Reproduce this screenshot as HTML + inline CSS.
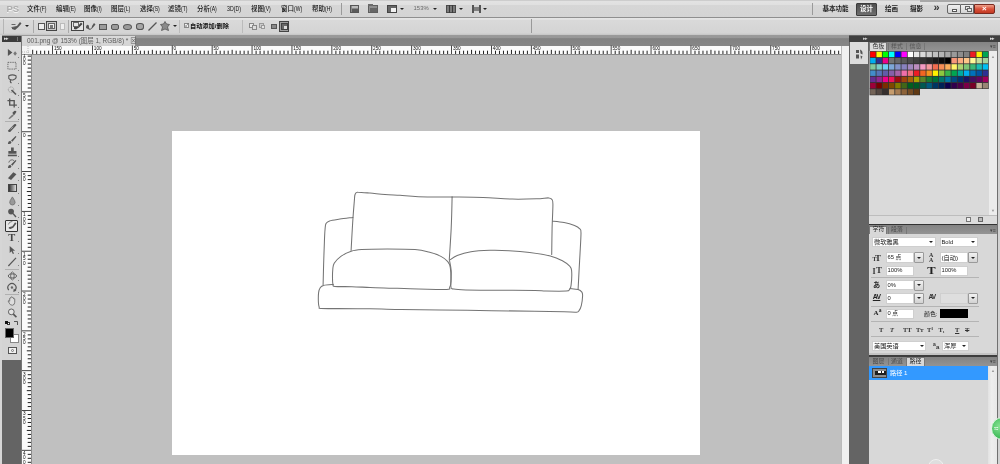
<!DOCTYPE html><html lang="zh"><head><meta charset="utf-8"><title>Photoshop</title><style>
html,body{margin:0;padding:0;}
body{width:1000px;height:464px;overflow:hidden;background:#c0c0c0;position:relative;
font-family:"Liberation Sans","Noto Sans CJK SC",sans-serif;}
div{position:absolute;box-sizing:border-box;}
.t{white-space:nowrap;filter:blur(0.3px);}
.b{filter:blur(0.3px);}
svg{position:absolute;overflow:visible;}
</style></head><body>
<div style="left:0px;top:0px;width:1000px;height:18px;background:linear-gradient(#cdcdcd 0px,#cdcdcd 1px,#e2e2e2 1.3px,#e0e0e0 4.5px,#d6d6d6 5.5px,#d4d4d4 17px);"></div>
<div style="left:0px;top:17px;width:1000px;height:0.9px;background:#8f8f8f;"></div>
<div style="left:0px;top:18px;width:1000px;height:17px;background:linear-gradient(#e6e6e6 0,#e2e2e2 1.5px,#d9d9d9 2.5px,#d4d4d4 15px,#c4c4c4 17px);"></div>
<div class="t " style="left:6.5px;top:3px;font-size:9.5px;color:#adadad;line-height:11.5px;font-weight:bold;letter-spacing:0px;text-shadow:0 0.5px 0 #f4f4f4;">PS</div>
<div class="t " style="left:27px;top:5px;font-size:6.5px;color:#111;line-height:8.5px;font-weight:500;">文件<span style="display:inline-block;transform:scaleX(.78);transform-origin:0 50%">(F)</span></div>
<div class="t " style="left:56px;top:5px;font-size:6.5px;color:#111;line-height:8.5px;font-weight:500;">编辑<span style="display:inline-block;transform:scaleX(.78);transform-origin:0 50%">(E)</span></div>
<div class="t " style="left:84px;top:5px;font-size:6.5px;color:#111;line-height:8.5px;font-weight:500;">图像<span style="display:inline-block;transform:scaleX(.78);transform-origin:0 50%">(I)</span></div>
<div class="t " style="left:111px;top:5px;font-size:6.5px;color:#111;line-height:8.5px;font-weight:500;">图层<span style="display:inline-block;transform:scaleX(.78);transform-origin:0 50%">(L)</span></div>
<div class="t " style="left:140px;top:5px;font-size:6.5px;color:#111;line-height:8.5px;font-weight:500;">选择<span style="display:inline-block;transform:scaleX(.78);transform-origin:0 50%">(S)</span></div>
<div class="t " style="left:168px;top:5px;font-size:6.5px;color:#111;line-height:8.5px;font-weight:500;">滤镜<span style="display:inline-block;transform:scaleX(.78);transform-origin:0 50%">(T)</span></div>
<div class="t " style="left:197px;top:5px;font-size:6.5px;color:#111;line-height:8.5px;font-weight:500;">分析<span style="display:inline-block;transform:scaleX(.78);transform-origin:0 50%">(A)</span></div>
<div class="t " style="left:227px;top:5px;font-size:6.5px;color:#111;line-height:8.5px;font-weight:500;"><span style="display:inline-block;transform:scaleX(.8);transform-origin:0 50%">3D(D)</span></div>
<div class="t " style="left:251px;top:5px;font-size:6.5px;color:#111;line-height:8.5px;font-weight:500;">视图<span style="display:inline-block;transform:scaleX(.78);transform-origin:0 50%">(V)</span></div>
<div class="t " style="left:281px;top:5px;font-size:6.5px;color:#111;line-height:8.5px;font-weight:500;">窗口<span style="display:inline-block;transform:scaleX(.78);transform-origin:0 50%">(W)</span></div>
<div class="t " style="left:312px;top:5px;font-size:6.5px;color:#111;line-height:8.5px;font-weight:500;">帮助<span style="display:inline-block;transform:scaleX(.78);transform-origin:0 50%">(H)</span></div>
<div style="left:341px;top:3px;width:1px;height:12px;background:#9a9a9a;"></div>
<div style="left:350px;top:4.5px;width:9.2px;height:8.5px;background:#8a8a8a;border:1px solid #555;"></div>
<div style="left:351.5px;top:6px;width:6px;height:1.5px;background:#bbb;"></div>
<div style="left:351.5px;top:9px;width:6px;height:2.5px;background:#5a5a5a;"></div>
<div style="left:368px;top:5px;width:10.4px;height:8px;background:#8e8e8e;border:1px solid #5e5e5e;"></div>
<div style="left:368px;top:4.3px;width:5px;height:1.5px;background:#6a6a6a;"></div>
<div style="left:370px;top:8px;width:6.5px;height:3.5px;background:#666;"></div>
<div style="left:387px;top:4.8px;width:10px;height:8.2px;background:#666;border:1px solid #444;"></div>
<div style="left:390.5px;top:8px;width:5.5px;height:4px;background:#f2f2f2;"></div>
<div style="left:400px;top:8px;width:0;height:0;border-left:2px solid transparent;border-right:2px solid transparent;border-top:2px solid #222;"></div>
<div class="t " style="left:413.6px;top:5px;font-size:5.9px;color:#6a6a6a;line-height:7.9px;">153%</div>
<div style="left:433px;top:8px;width:0;height:0;border-left:2px solid transparent;border-right:2px solid transparent;border-top:2px solid #222;"></div>
<div style="left:446.4px;top:4.8px;width:9.2px;height:8.2px;background:#7a7a7a;border:1px solid #4a4a4a;"></div>
<div style="left:449.2px;top:5px;width:0.9px;height:8px;background:#3a3a3a;"></div>
<div style="left:452.2px;top:5px;width:0.9px;height:8px;background:#3a3a3a;"></div>
<div style="left:458.8px;top:8px;width:0;height:0;border-left:2px solid transparent;border-right:2px solid transparent;border-top:2px solid #222;"></div>
<div style="left:471.5px;top:4.8px;width:9px;height:8.2px;border-left:2px solid #555;border-right:2px solid #555;"></div>
<div style="left:473.5px;top:6.5px;width:5px;height:4.5px;background:#808080;"></div>
<div style="left:483.3px;top:8px;width:0;height:0;border-left:2px solid transparent;border-right:2px solid transparent;border-top:2px solid #222;"></div>
<div style="left:812px;top:3px;width:1px;height:12px;background:#9a9a9a;"></div>
<div class="t " style="left:822.5px;top:5px;font-size:6.5px;color:#222;line-height:8.5px;font-weight:bold;">基本功能</div>
<div style="left:855.6px;top:3px;width:21.4px;height:12.6px;background:linear-gradient(#4e4e4e,#6e6e6e);border:1px solid #3c3c3c;border-radius:1px;"></div>
<div class="t " style="left:860px;top:5px;font-size:6.5px;color:#fff;line-height:8.5px;font-weight:bold;">设计</div>
<div class="t " style="left:885px;top:5px;font-size:6.5px;color:#222;line-height:8.5px;font-weight:bold;">绘画</div>
<div class="t " style="left:910px;top:5px;font-size:6.5px;color:#222;line-height:8.5px;font-weight:bold;">摄影</div>
<div class="t " style="left:933.5px;top:1px;font-size:11px;color:#333;line-height:13px;font-weight:bold;">»</div>
<div style="left:920px;top:0px;width:80px;height:1.6px;background:#a8a8a8;"></div>
<div style="left:947px;top:4px;width:14px;height:9.6px;background:linear-gradient(#f0f0f0,#d4d4d4);border:1px solid #666;border-radius:2px 0 0 2px;"></div>
<div style="left:951.5px;top:8.5px;width:5.5px;height:3px;background:#fff;border:1px solid #555;"></div>
<div style="left:961px;top:4px;width:13.4px;height:9.6px;background:linear-gradient(#f0f0f0,#d4d4d4);border:1px solid #666;border-left:none;"></div>
<div style="left:965px;top:6px;width:5px;height:4px;border:1px solid #666;"></div>
<div style="left:966.5px;top:7.5px;width:5px;height:4px;background:#e8e8e8;border:1px solid #666;"></div>
<div style="left:974.4px;top:4px;width:20.6px;height:9.6px;background:linear-gradient(#eda08a,#d9513a 50%,#c23a24);border:1px solid #7a2a20;border-radius:0 2px 2px 0;"></div>
<div class="t " style="left:982px;top:3.5px;font-size:8px;color:#fff;line-height:10px;font-weight:bold;">×</div>
<div style="left:3px;top:19px;width:1px;height:15px;background:#b5b5b5;"></div>
<svg style="left:11px;top:21px" width="11" height="10" viewBox="0 0 11 10"><path d="M1 6 L6 5 L9 1 L10.5 2.5 L7 6.5 L4 9 L1 8 Z" fill="#555"/><path d="M0.5 3.5 h4 M0.5 6.5 h3" stroke="#666" stroke-width="1"/></svg>
<div style="left:25px;top:25px;width:0;height:0;border-left:2px solid transparent;border-right:2px solid transparent;border-top:2px solid #222;"></div>
<div style="left:33px;top:20px;width:1px;height:13px;background:#aaa;"></div>
<div style="left:38px;top:23px;width:7px;height:7px;background:#eee;border:1px solid #555;"></div>
<div style="left:46px;top:21px;width:11px;height:10px;background:#c8c8c8;border:1px solid #444;"></div>
<div style="left:48px;top:23px;width:7px;height:6px;background:#eee;border:1px solid #666;"></div>
<div style="left:50px;top:25px;width:3px;height:3px;background:#777;"></div>
<div style="left:60px;top:23px;width:5px;height:7px;background:#eee;border:1px solid #bbb;"></div>
<div style="left:68px;top:20px;width:1px;height:13px;background:#aaa;"></div>
<div style="left:71px;top:21px;width:13px;height:10px;background:#e4e4e4;border:1px solid #444;"></div>
<svg style="left:73px;top:22px" width="10" height="8" viewBox="0 0 10 8"><path d="M1 5 L5 4 L8 0.5 L9.5 2 L6 5.5 L3 7.5 L1 7 Z" fill="#444"/><rect x="0.5" y="0.5" width="5" height="4" fill="none" stroke="#666"/></svg>
<svg style="left:85px;top:22px" width="11" height="9" viewBox="0 0 11 9"><path d="M1 6 C1 2 4 2 4 5 S7 7 7 4 L9 1 L10.5 2.5 L7.5 6 L5 8 Z" fill="#555"/></svg>
<div style="left:98.5px;top:24px;width:8px;height:6px;background:#9a9a9a;border:1px solid #555;"></div>
<div style="left:111px;top:24px;width:8px;height:6px;background:#9a9a9a;border:1px solid #555;border-radius:2px;"></div>
<div style="left:123px;top:24px;width:9px;height:6px;background:#9a9a9a;border:1px solid #555;border-radius:50%;"></div>
<div style="left:136px;top:23px;width:8px;height:7px;background:#a5a5a5;border:1px solid #555;border-radius:40%;"></div>
<svg style="left:148px;top:22px" width="9" height="9"><path d="M0.5 8.5 L8.5 0.5" stroke="#555" stroke-width="1.2"/></svg>
<svg style="left:160px;top:21px" width="10" height="10" viewBox="0 0 10 10"><path d="M5 0.5 L6.5 3 L9.5 3.5 L7.5 6 L8.5 9.5 L5 8 L1.5 9.5 L2.5 6 L0.5 3.5 L3.5 3 Z" fill="#8a8a8a" stroke="#555" stroke-width="0.8"/></svg>
<div style="left:173px;top:25px;width:0;height:0;border-left:2px solid transparent;border-right:2px solid transparent;border-top:2px solid #222;"></div>
<div style="left:179px;top:20px;width:1px;height:13px;background:#bbb;"></div>
<div style="left:184px;top:23px;width:5px;height:5px;background:#f4f4f4;border:1px solid #888;"></div>
<div class="t " style="left:185px;top:21.5px;font-size:5px;color:#333;line-height:7px;">✓</div>
<div class="t " style="left:190px;top:22px;font-size:6.2px;color:#111;line-height:8.2px;font-weight:bold;">自动添加/删除</div>
<div style="left:242px;top:20px;width:1px;height:13px;background:#bbb;"></div>
<div style="left:249px;top:22.5px;width:5px;height:5px;background:#e8e8e8;border:1px solid #888;"></div>
<div style="left:251.5px;top:24.5px;width:5px;height:5px;background:#ddd;border:1px solid #888;"></div>
<div style="left:258.5px;top:22.5px;width:5px;height:5px;background:#ccc;border:1px solid #999;"></div>
<div style="left:260.5px;top:24.5px;width:4.5px;height:4.5px;background:#e4e4e4;border:1px solid #999;"></div>
<div style="left:271px;top:23.5px;width:6px;height:5.5px;background:#888;border:1px solid #555;"></div>
<div style="left:278.8px;top:21px;width:10.5px;height:10.5px;background:#a0a0a0;border:1px solid #444;"></div>
<div style="left:281px;top:23px;width:6.5px;height:6.5px;background:#6a6a6a;border:1px solid #444;"></div>
<div style="left:284px;top:25.5px;width:3px;height:3px;background:#ddd;"></div>
<div style="left:531px;top:19px;width:1px;height:14px;background:#999;"></div>
<div style="left:0px;top:35px;width:849px;height:10.5px;background:linear-gradient(#9a9a9a 0,#989898 3px,#828282 3.6px,#868686 100%);"></div>
<div style="left:0px;top:35px;width:2px;height:429px;background:#d6d6d6;"></div>
<div style="left:2px;top:35.5px;width:19.4px;height:6.5px;background:#3c3c3c;"></div>
<div class="t " style="left:4px;top:35px;font-size:5px;color:#ddd;line-height:7px;letter-spacing:-1px;">▸▸</div>
<div style="left:17px;top:37px;width:1px;height:4px;background:#777;"></div>
<div style="left:22px;top:35.5px;width:114px;height:10px;background:linear-gradient(#dadada,#d4d4d4);border-right:0.7px solid #888;"></div>
<div class="t " style="left:27px;top:36.5px;font-size:6.45px;color:#5a5a5a;line-height:8.45px;">001.png @ 153% (图层 1, RGB/8) * ⊠</div>
<div style="left:21.7px;top:45.5px;width:819.3px;height:8.7px;background:#fbfbfb;"></div>
<div style="left:22px;top:53.7px;width:819px;height:0.8px;background:#8a8a8a;"></div>
<div style="left:21.7px;top:45.5px;width:9.3px;height:418.5px;background:#fbfbfb;"></div>
<div style="left:30.6px;top:54px;width:0.7px;height:410px;background:#8a8a8a;"></div>
<svg class="b" style="left:0;top:0" width="1000" height="464"><rect x="32.15" y="49.80" width="1" height="4.2" fill="#222"/><rect x="36.14" y="50.70" width="1" height="3.3" fill="#222"/><rect x="40.13" y="50.70" width="1" height="3.3" fill="#222"/><rect x="44.12" y="50.70" width="1" height="3.3" fill="#222"/><rect x="48.11" y="50.70" width="1" height="3.3" fill="#222"/><rect x="52.10" y="45.5" width="0.9" height="8.5" fill="#333"/> <text x="53.90" y="50.3" font-size="4.7" fill="#111" font-family="Liberation Sans, sans-serif">150</text><rect x="56.09" y="50.70" width="1" height="3.3" fill="#222"/><rect x="60.08" y="50.70" width="1" height="3.3" fill="#222"/><rect x="64.07" y="50.70" width="1" height="3.3" fill="#222"/><rect x="68.06" y="50.70" width="1" height="3.3" fill="#222"/><rect x="72.05" y="49.80" width="1" height="4.2" fill="#222"/><rect x="76.04" y="50.70" width="1" height="3.3" fill="#222"/><rect x="80.03" y="50.70" width="1" height="3.3" fill="#222"/><rect x="84.02" y="50.70" width="1" height="3.3" fill="#222"/><rect x="88.01" y="50.70" width="1" height="3.3" fill="#222"/><rect x="92.00" y="45.5" width="0.9" height="8.5" fill="#333"/> <text x="93.80" y="50.3" font-size="4.7" fill="#111" font-family="Liberation Sans, sans-serif">100</text><rect x="95.99" y="50.70" width="1" height="3.3" fill="#222"/><rect x="99.98" y="50.70" width="1" height="3.3" fill="#222"/><rect x="103.97" y="50.70" width="1" height="3.3" fill="#222"/><rect x="107.96" y="50.70" width="1" height="3.3" fill="#222"/><rect x="111.95" y="49.80" width="1" height="4.2" fill="#222"/><rect x="115.94" y="50.70" width="1" height="3.3" fill="#222"/><rect x="119.93" y="50.70" width="1" height="3.3" fill="#222"/><rect x="123.92" y="50.70" width="1" height="3.3" fill="#222"/><rect x="127.91" y="50.70" width="1" height="3.3" fill="#222"/><rect x="131.90" y="45.5" width="0.9" height="8.5" fill="#333"/> <text x="133.70" y="50.3" font-size="4.7" fill="#111" font-family="Liberation Sans, sans-serif">50</text><rect x="135.89" y="50.70" width="1" height="3.3" fill="#222"/><rect x="139.88" y="50.70" width="1" height="3.3" fill="#222"/><rect x="143.87" y="50.70" width="1" height="3.3" fill="#222"/><rect x="147.86" y="50.70" width="1" height="3.3" fill="#222"/><rect x="151.85" y="49.80" width="1" height="4.2" fill="#222"/><rect x="155.84" y="50.70" width="1" height="3.3" fill="#222"/><rect x="159.83" y="50.70" width="1" height="3.3" fill="#222"/><rect x="163.82" y="50.70" width="1" height="3.3" fill="#222"/><rect x="167.81" y="50.70" width="1" height="3.3" fill="#222"/><rect x="171.80" y="45.5" width="0.9" height="8.5" fill="#333"/> <text x="173.60" y="50.3" font-size="4.7" fill="#111" font-family="Liberation Sans, sans-serif">0</text><rect x="175.79" y="50.70" width="1" height="3.3" fill="#222"/><rect x="179.78" y="50.70" width="1" height="3.3" fill="#222"/><rect x="183.77" y="50.70" width="1" height="3.3" fill="#222"/><rect x="187.76" y="50.70" width="1" height="3.3" fill="#222"/><rect x="191.75" y="49.80" width="1" height="4.2" fill="#222"/><rect x="195.74" y="50.70" width="1" height="3.3" fill="#222"/><rect x="199.73" y="50.70" width="1" height="3.3" fill="#222"/><rect x="203.72" y="50.70" width="1" height="3.3" fill="#222"/><rect x="207.71" y="50.70" width="1" height="3.3" fill="#222"/><rect x="211.70" y="45.5" width="0.9" height="8.5" fill="#333"/> <text x="213.50" y="50.3" font-size="4.7" fill="#111" font-family="Liberation Sans, sans-serif">50</text><rect x="215.69" y="50.70" width="1" height="3.3" fill="#222"/><rect x="219.68" y="50.70" width="1" height="3.3" fill="#222"/><rect x="223.67" y="50.70" width="1" height="3.3" fill="#222"/><rect x="227.66" y="50.70" width="1" height="3.3" fill="#222"/><rect x="231.65" y="49.80" width="1" height="4.2" fill="#222"/><rect x="235.64" y="50.70" width="1" height="3.3" fill="#222"/><rect x="239.63" y="50.70" width="1" height="3.3" fill="#222"/><rect x="243.62" y="50.70" width="1" height="3.3" fill="#222"/><rect x="247.61" y="50.70" width="1" height="3.3" fill="#222"/><rect x="251.60" y="45.5" width="0.9" height="8.5" fill="#333"/> <text x="253.40" y="50.3" font-size="4.7" fill="#111" font-family="Liberation Sans, sans-serif">100</text><rect x="255.59" y="50.70" width="1" height="3.3" fill="#222"/><rect x="259.58" y="50.70" width="1" height="3.3" fill="#222"/><rect x="263.57" y="50.70" width="1" height="3.3" fill="#222"/><rect x="267.56" y="50.70" width="1" height="3.3" fill="#222"/><rect x="271.55" y="49.80" width="1" height="4.2" fill="#222"/><rect x="275.54" y="50.70" width="1" height="3.3" fill="#222"/><rect x="279.53" y="50.70" width="1" height="3.3" fill="#222"/><rect x="283.52" y="50.70" width="1" height="3.3" fill="#222"/><rect x="287.51" y="50.70" width="1" height="3.3" fill="#222"/><rect x="291.50" y="45.5" width="0.9" height="8.5" fill="#333"/> <text x="293.30" y="50.3" font-size="4.7" fill="#111" font-family="Liberation Sans, sans-serif">150</text><rect x="295.49" y="50.70" width="1" height="3.3" fill="#222"/><rect x="299.48" y="50.70" width="1" height="3.3" fill="#222"/><rect x="303.47" y="50.70" width="1" height="3.3" fill="#222"/><rect x="307.46" y="50.70" width="1" height="3.3" fill="#222"/><rect x="311.45" y="49.80" width="1" height="4.2" fill="#222"/><rect x="315.44" y="50.70" width="1" height="3.3" fill="#222"/><rect x="319.43" y="50.70" width="1" height="3.3" fill="#222"/><rect x="323.42" y="50.70" width="1" height="3.3" fill="#222"/><rect x="327.41" y="50.70" width="1" height="3.3" fill="#222"/><rect x="331.40" y="45.5" width="0.9" height="8.5" fill="#333"/> <text x="333.20" y="50.3" font-size="4.7" fill="#111" font-family="Liberation Sans, sans-serif">200</text><rect x="335.39" y="50.70" width="1" height="3.3" fill="#222"/><rect x="339.38" y="50.70" width="1" height="3.3" fill="#222"/><rect x="343.37" y="50.70" width="1" height="3.3" fill="#222"/><rect x="347.36" y="50.70" width="1" height="3.3" fill="#222"/><rect x="351.35" y="49.80" width="1" height="4.2" fill="#222"/><rect x="355.34" y="50.70" width="1" height="3.3" fill="#222"/><rect x="359.33" y="50.70" width="1" height="3.3" fill="#222"/><rect x="363.32" y="50.70" width="1" height="3.3" fill="#222"/><rect x="367.31" y="50.70" width="1" height="3.3" fill="#222"/><rect x="371.30" y="45.5" width="0.9" height="8.5" fill="#333"/> <text x="373.10" y="50.3" font-size="4.7" fill="#111" font-family="Liberation Sans, sans-serif">250</text><rect x="375.29" y="50.70" width="1" height="3.3" fill="#222"/><rect x="379.28" y="50.70" width="1" height="3.3" fill="#222"/><rect x="383.27" y="50.70" width="1" height="3.3" fill="#222"/><rect x="387.26" y="50.70" width="1" height="3.3" fill="#222"/><rect x="391.25" y="49.80" width="1" height="4.2" fill="#222"/><rect x="395.24" y="50.70" width="1" height="3.3" fill="#222"/><rect x="399.23" y="50.70" width="1" height="3.3" fill="#222"/><rect x="403.22" y="50.70" width="1" height="3.3" fill="#222"/><rect x="407.21" y="50.70" width="1" height="3.3" fill="#222"/><rect x="411.20" y="45.5" width="0.9" height="8.5" fill="#333"/> <text x="413.00" y="50.3" font-size="4.7" fill="#111" font-family="Liberation Sans, sans-serif">300</text><rect x="415.19" y="50.70" width="1" height="3.3" fill="#222"/><rect x="419.18" y="50.70" width="1" height="3.3" fill="#222"/><rect x="423.17" y="50.70" width="1" height="3.3" fill="#222"/><rect x="427.16" y="50.70" width="1" height="3.3" fill="#222"/><rect x="431.15" y="49.80" width="1" height="4.2" fill="#222"/><rect x="435.14" y="50.70" width="1" height="3.3" fill="#222"/><rect x="439.13" y="50.70" width="1" height="3.3" fill="#222"/><rect x="443.12" y="50.70" width="1" height="3.3" fill="#222"/><rect x="447.11" y="50.70" width="1" height="3.3" fill="#222"/><rect x="451.10" y="45.5" width="0.9" height="8.5" fill="#333"/> <text x="452.90" y="50.3" font-size="4.7" fill="#111" font-family="Liberation Sans, sans-serif">350</text><rect x="455.09" y="50.70" width="1" height="3.3" fill="#222"/><rect x="459.08" y="50.70" width="1" height="3.3" fill="#222"/><rect x="463.07" y="50.70" width="1" height="3.3" fill="#222"/><rect x="467.06" y="50.70" width="1" height="3.3" fill="#222"/><rect x="471.05" y="49.80" width="1" height="4.2" fill="#222"/><rect x="475.04" y="50.70" width="1" height="3.3" fill="#222"/><rect x="479.03" y="50.70" width="1" height="3.3" fill="#222"/><rect x="483.02" y="50.70" width="1" height="3.3" fill="#222"/><rect x="487.01" y="50.70" width="1" height="3.3" fill="#222"/><rect x="491.00" y="45.5" width="0.9" height="8.5" fill="#333"/> <text x="492.80" y="50.3" font-size="4.7" fill="#111" font-family="Liberation Sans, sans-serif">400</text><rect x="494.99" y="50.70" width="1" height="3.3" fill="#222"/><rect x="498.98" y="50.70" width="1" height="3.3" fill="#222"/><rect x="502.97" y="50.70" width="1" height="3.3" fill="#222"/><rect x="506.96" y="50.70" width="1" height="3.3" fill="#222"/><rect x="510.95" y="49.80" width="1" height="4.2" fill="#222"/><rect x="514.94" y="50.70" width="1" height="3.3" fill="#222"/><rect x="518.93" y="50.70" width="1" height="3.3" fill="#222"/><rect x="522.92" y="50.70" width="1" height="3.3" fill="#222"/><rect x="526.91" y="50.70" width="1" height="3.3" fill="#222"/><rect x="530.90" y="45.5" width="0.9" height="8.5" fill="#333"/> <text x="532.70" y="50.3" font-size="4.7" fill="#111" font-family="Liberation Sans, sans-serif">450</text><rect x="534.89" y="50.70" width="1" height="3.3" fill="#222"/><rect x="538.88" y="50.70" width="1" height="3.3" fill="#222"/><rect x="542.87" y="50.70" width="1" height="3.3" fill="#222"/><rect x="546.86" y="50.70" width="1" height="3.3" fill="#222"/><rect x="550.85" y="49.80" width="1" height="4.2" fill="#222"/><rect x="554.84" y="50.70" width="1" height="3.3" fill="#222"/><rect x="558.83" y="50.70" width="1" height="3.3" fill="#222"/><rect x="562.82" y="50.70" width="1" height="3.3" fill="#222"/><rect x="566.81" y="50.70" width="1" height="3.3" fill="#222"/><rect x="570.80" y="45.5" width="0.9" height="8.5" fill="#333"/> <text x="572.60" y="50.3" font-size="4.7" fill="#111" font-family="Liberation Sans, sans-serif">500</text><rect x="574.79" y="50.70" width="1" height="3.3" fill="#222"/><rect x="578.78" y="50.70" width="1" height="3.3" fill="#222"/><rect x="582.77" y="50.70" width="1" height="3.3" fill="#222"/><rect x="586.76" y="50.70" width="1" height="3.3" fill="#222"/><rect x="590.75" y="49.80" width="1" height="4.2" fill="#222"/><rect x="594.74" y="50.70" width="1" height="3.3" fill="#222"/><rect x="598.73" y="50.70" width="1" height="3.3" fill="#222"/><rect x="602.72" y="50.70" width="1" height="3.3" fill="#222"/><rect x="606.71" y="50.70" width="1" height="3.3" fill="#222"/><rect x="610.70" y="45.5" width="0.9" height="8.5" fill="#333"/> <text x="612.50" y="50.3" font-size="4.7" fill="#111" font-family="Liberation Sans, sans-serif">550</text><rect x="614.69" y="50.70" width="1" height="3.3" fill="#222"/><rect x="618.68" y="50.70" width="1" height="3.3" fill="#222"/><rect x="622.67" y="50.70" width="1" height="3.3" fill="#222"/><rect x="626.66" y="50.70" width="1" height="3.3" fill="#222"/><rect x="630.65" y="49.80" width="1" height="4.2" fill="#222"/><rect x="634.64" y="50.70" width="1" height="3.3" fill="#222"/><rect x="638.63" y="50.70" width="1" height="3.3" fill="#222"/><rect x="642.62" y="50.70" width="1" height="3.3" fill="#222"/><rect x="646.61" y="50.70" width="1" height="3.3" fill="#222"/><rect x="650.60" y="45.5" width="0.9" height="8.5" fill="#333"/> <text x="652.40" y="50.3" font-size="4.7" fill="#111" font-family="Liberation Sans, sans-serif">600</text><rect x="654.59" y="50.70" width="1" height="3.3" fill="#222"/><rect x="658.58" y="50.70" width="1" height="3.3" fill="#222"/><rect x="662.57" y="50.70" width="1" height="3.3" fill="#222"/><rect x="666.56" y="50.70" width="1" height="3.3" fill="#222"/><rect x="670.55" y="49.80" width="1" height="4.2" fill="#222"/><rect x="674.54" y="50.70" width="1" height="3.3" fill="#222"/><rect x="678.53" y="50.70" width="1" height="3.3" fill="#222"/><rect x="682.52" y="50.70" width="1" height="3.3" fill="#222"/><rect x="686.51" y="50.70" width="1" height="3.3" fill="#222"/><rect x="690.50" y="45.5" width="0.9" height="8.5" fill="#333"/> <text x="692.30" y="50.3" font-size="4.7" fill="#111" font-family="Liberation Sans, sans-serif">650</text><rect x="694.49" y="50.70" width="1" height="3.3" fill="#222"/><rect x="698.48" y="50.70" width="1" height="3.3" fill="#222"/><rect x="702.47" y="50.70" width="1" height="3.3" fill="#222"/><rect x="706.46" y="50.70" width="1" height="3.3" fill="#222"/><rect x="710.45" y="49.80" width="1" height="4.2" fill="#222"/><rect x="714.44" y="50.70" width="1" height="3.3" fill="#222"/><rect x="718.43" y="50.70" width="1" height="3.3" fill="#222"/><rect x="722.42" y="50.70" width="1" height="3.3" fill="#222"/><rect x="726.41" y="50.70" width="1" height="3.3" fill="#222"/><rect x="730.40" y="45.5" width="0.9" height="8.5" fill="#333"/> <text x="732.20" y="50.3" font-size="4.7" fill="#111" font-family="Liberation Sans, sans-serif">700</text><rect x="734.39" y="50.70" width="1" height="3.3" fill="#222"/><rect x="738.38" y="50.70" width="1" height="3.3" fill="#222"/><rect x="742.37" y="50.70" width="1" height="3.3" fill="#222"/><rect x="746.36" y="50.70" width="1" height="3.3" fill="#222"/><rect x="750.35" y="49.80" width="1" height="4.2" fill="#222"/><rect x="754.34" y="50.70" width="1" height="3.3" fill="#222"/><rect x="758.33" y="50.70" width="1" height="3.3" fill="#222"/><rect x="762.32" y="50.70" width="1" height="3.3" fill="#222"/><rect x="766.31" y="50.70" width="1" height="3.3" fill="#222"/><rect x="770.30" y="45.5" width="0.9" height="8.5" fill="#333"/> <text x="772.10" y="50.3" font-size="4.7" fill="#111" font-family="Liberation Sans, sans-serif">750</text><rect x="774.29" y="50.70" width="1" height="3.3" fill="#222"/><rect x="778.28" y="50.70" width="1" height="3.3" fill="#222"/><rect x="782.27" y="50.70" width="1" height="3.3" fill="#222"/><rect x="786.26" y="50.70" width="1" height="3.3" fill="#222"/><rect x="790.25" y="49.80" width="1" height="4.2" fill="#222"/><rect x="794.24" y="50.70" width="1" height="3.3" fill="#222"/><rect x="798.23" y="50.70" width="1" height="3.3" fill="#222"/><rect x="802.22" y="50.70" width="1" height="3.3" fill="#222"/><rect x="806.21" y="50.70" width="1" height="3.3" fill="#222"/><rect x="810.20" y="45.5" width="0.9" height="8.5" fill="#333"/> <text x="812.00" y="50.3" font-size="4.7" fill="#111" font-family="Liberation Sans, sans-serif">800</text><rect x="814.19" y="50.70" width="1" height="3.3" fill="#222"/><rect x="818.18" y="50.70" width="1" height="3.3" fill="#222"/><rect x="822.17" y="50.70" width="1" height="3.3" fill="#222"/><rect x="826.16" y="50.70" width="1" height="3.3" fill="#222"/><rect x="830.15" y="49.80" width="1" height="4.2" fill="#222"/><rect x="834.14" y="50.70" width="1" height="3.3" fill="#222"/><rect x="838.13" y="50.70" width="1" height="3.3" fill="#222"/><rect x="22" y="53.60" width="9" height="0.9" fill="#333"/><text x="23" y="57.06" font-size="4.7" fill="#111" font-family="Liberation Sans, sans-serif">1</text><text x="23" y="61.26" font-size="4.7" fill="#111" font-family="Liberation Sans, sans-serif">0</text><text x="23" y="65.46" font-size="4.7" fill="#111" font-family="Liberation Sans, sans-serif">0</text><rect x="27.70" y="55.64" width="3.3" height="1" fill="#222"/><rect x="27.70" y="59.62" width="3.3" height="1" fill="#222"/><rect x="27.70" y="63.61" width="3.3" height="1" fill="#222"/><rect x="27.70" y="67.59" width="3.3" height="1" fill="#222"/><rect x="26.80" y="71.57" width="4.2" height="1" fill="#222"/><rect x="27.70" y="75.55" width="3.3" height="1" fill="#222"/><rect x="27.70" y="79.53" width="3.3" height="1" fill="#222"/><rect x="27.70" y="83.52" width="3.3" height="1" fill="#222"/><rect x="27.70" y="87.50" width="3.3" height="1" fill="#222"/><rect x="22" y="91.48" width="9" height="0.9" fill="#333"/><text x="23" y="96.88" font-size="4.7" fill="#111" font-family="Liberation Sans, sans-serif">5</text><text x="23" y="101.08" font-size="4.7" fill="#111" font-family="Liberation Sans, sans-serif">0</text><rect x="27.70" y="95.46" width="3.3" height="1" fill="#222"/><rect x="27.70" y="99.44" width="3.3" height="1" fill="#222"/><rect x="27.70" y="103.43" width="3.3" height="1" fill="#222"/><rect x="27.70" y="107.41" width="3.3" height="1" fill="#222"/><rect x="26.80" y="111.39" width="4.2" height="1" fill="#222"/><rect x="27.70" y="115.37" width="3.3" height="1" fill="#222"/><rect x="27.70" y="119.35" width="3.3" height="1" fill="#222"/><rect x="27.70" y="123.34" width="3.3" height="1" fill="#222"/><rect x="27.70" y="127.32" width="3.3" height="1" fill="#222"/><rect x="22" y="131.30" width="9" height="0.9" fill="#333"/><text x="23" y="136.70" font-size="4.7" fill="#111" font-family="Liberation Sans, sans-serif">0</text><rect x="27.70" y="135.28" width="3.3" height="1" fill="#222"/><rect x="27.70" y="139.26" width="3.3" height="1" fill="#222"/><rect x="27.70" y="143.25" width="3.3" height="1" fill="#222"/><rect x="27.70" y="147.23" width="3.3" height="1" fill="#222"/><rect x="26.80" y="151.21" width="4.2" height="1" fill="#222"/><rect x="27.70" y="155.19" width="3.3" height="1" fill="#222"/><rect x="27.70" y="159.17" width="3.3" height="1" fill="#222"/><rect x="27.70" y="163.16" width="3.3" height="1" fill="#222"/><rect x="27.70" y="167.14" width="3.3" height="1" fill="#222"/><rect x="22" y="171.12" width="9" height="0.9" fill="#333"/><text x="23" y="176.52" font-size="4.7" fill="#111" font-family="Liberation Sans, sans-serif">5</text><text x="23" y="180.72" font-size="4.7" fill="#111" font-family="Liberation Sans, sans-serif">0</text><rect x="27.70" y="175.10" width="3.3" height="1" fill="#222"/><rect x="27.70" y="179.08" width="3.3" height="1" fill="#222"/><rect x="27.70" y="183.07" width="3.3" height="1" fill="#222"/><rect x="27.70" y="187.05" width="3.3" height="1" fill="#222"/><rect x="26.80" y="191.03" width="4.2" height="1" fill="#222"/><rect x="27.70" y="195.01" width="3.3" height="1" fill="#222"/><rect x="27.70" y="198.99" width="3.3" height="1" fill="#222"/><rect x="27.70" y="202.98" width="3.3" height="1" fill="#222"/><rect x="27.70" y="206.96" width="3.3" height="1" fill="#222"/><rect x="22" y="210.94" width="9" height="0.9" fill="#333"/><text x="23" y="216.34" font-size="4.7" fill="#111" font-family="Liberation Sans, sans-serif">1</text><text x="23" y="220.54" font-size="4.7" fill="#111" font-family="Liberation Sans, sans-serif">0</text><text x="23" y="224.74" font-size="4.7" fill="#111" font-family="Liberation Sans, sans-serif">0</text><rect x="27.70" y="214.92" width="3.3" height="1" fill="#222"/><rect x="27.70" y="218.90" width="3.3" height="1" fill="#222"/><rect x="27.70" y="222.89" width="3.3" height="1" fill="#222"/><rect x="27.70" y="226.87" width="3.3" height="1" fill="#222"/><rect x="26.80" y="230.85" width="4.2" height="1" fill="#222"/><rect x="27.70" y="234.83" width="3.3" height="1" fill="#222"/><rect x="27.70" y="238.81" width="3.3" height="1" fill="#222"/><rect x="27.70" y="242.80" width="3.3" height="1" fill="#222"/><rect x="27.70" y="246.78" width="3.3" height="1" fill="#222"/><rect x="22" y="250.76" width="9" height="0.9" fill="#333"/><text x="23" y="256.16" font-size="4.7" fill="#111" font-family="Liberation Sans, sans-serif">1</text><text x="23" y="260.36" font-size="4.7" fill="#111" font-family="Liberation Sans, sans-serif">5</text><text x="23" y="264.56" font-size="4.7" fill="#111" font-family="Liberation Sans, sans-serif">0</text><rect x="27.70" y="254.74" width="3.3" height="1" fill="#222"/><rect x="27.70" y="258.72" width="3.3" height="1" fill="#222"/><rect x="27.70" y="262.71" width="3.3" height="1" fill="#222"/><rect x="27.70" y="266.69" width="3.3" height="1" fill="#222"/><rect x="26.80" y="270.67" width="4.2" height="1" fill="#222"/><rect x="27.70" y="274.65" width="3.3" height="1" fill="#222"/><rect x="27.70" y="278.63" width="3.3" height="1" fill="#222"/><rect x="27.70" y="282.62" width="3.3" height="1" fill="#222"/><rect x="27.70" y="286.60" width="3.3" height="1" fill="#222"/><rect x="22" y="290.58" width="9" height="0.9" fill="#333"/><text x="23" y="295.98" font-size="4.7" fill="#111" font-family="Liberation Sans, sans-serif">2</text><text x="23" y="300.18" font-size="4.7" fill="#111" font-family="Liberation Sans, sans-serif">0</text><text x="23" y="304.38" font-size="4.7" fill="#111" font-family="Liberation Sans, sans-serif">0</text><rect x="27.70" y="294.56" width="3.3" height="1" fill="#222"/><rect x="27.70" y="298.54" width="3.3" height="1" fill="#222"/><rect x="27.70" y="302.53" width="3.3" height="1" fill="#222"/><rect x="27.70" y="306.51" width="3.3" height="1" fill="#222"/><rect x="26.80" y="310.49" width="4.2" height="1" fill="#222"/><rect x="27.70" y="314.47" width="3.3" height="1" fill="#222"/><rect x="27.70" y="318.45" width="3.3" height="1" fill="#222"/><rect x="27.70" y="322.44" width="3.3" height="1" fill="#222"/><rect x="27.70" y="326.42" width="3.3" height="1" fill="#222"/><rect x="22" y="330.40" width="9" height="0.9" fill="#333"/><text x="23" y="335.80" font-size="4.7" fill="#111" font-family="Liberation Sans, sans-serif">2</text><text x="23" y="340.00" font-size="4.7" fill="#111" font-family="Liberation Sans, sans-serif">5</text><text x="23" y="344.20" font-size="4.7" fill="#111" font-family="Liberation Sans, sans-serif">0</text><rect x="27.70" y="334.38" width="3.3" height="1" fill="#222"/><rect x="27.70" y="338.36" width="3.3" height="1" fill="#222"/><rect x="27.70" y="342.35" width="3.3" height="1" fill="#222"/><rect x="27.70" y="346.33" width="3.3" height="1" fill="#222"/><rect x="26.80" y="350.31" width="4.2" height="1" fill="#222"/><rect x="27.70" y="354.29" width="3.3" height="1" fill="#222"/><rect x="27.70" y="358.27" width="3.3" height="1" fill="#222"/><rect x="27.70" y="362.26" width="3.3" height="1" fill="#222"/><rect x="27.70" y="366.24" width="3.3" height="1" fill="#222"/><rect x="22" y="370.22" width="9" height="0.9" fill="#333"/><text x="23" y="375.62" font-size="4.7" fill="#111" font-family="Liberation Sans, sans-serif">3</text><text x="23" y="379.82" font-size="4.7" fill="#111" font-family="Liberation Sans, sans-serif">0</text><text x="23" y="384.02" font-size="4.7" fill="#111" font-family="Liberation Sans, sans-serif">0</text><rect x="27.70" y="374.20" width="3.3" height="1" fill="#222"/><rect x="27.70" y="378.18" width="3.3" height="1" fill="#222"/><rect x="27.70" y="382.17" width="3.3" height="1" fill="#222"/><rect x="27.70" y="386.15" width="3.3" height="1" fill="#222"/><rect x="26.80" y="390.13" width="4.2" height="1" fill="#222"/><rect x="27.70" y="394.11" width="3.3" height="1" fill="#222"/><rect x="27.70" y="398.09" width="3.3" height="1" fill="#222"/><rect x="27.70" y="402.08" width="3.3" height="1" fill="#222"/><rect x="27.70" y="406.06" width="3.3" height="1" fill="#222"/><rect x="22" y="410.04" width="9" height="0.9" fill="#333"/><text x="23" y="415.44" font-size="4.7" fill="#111" font-family="Liberation Sans, sans-serif">3</text><text x="23" y="419.64" font-size="4.7" fill="#111" font-family="Liberation Sans, sans-serif">5</text><text x="23" y="423.84" font-size="4.7" fill="#111" font-family="Liberation Sans, sans-serif">0</text><rect x="27.70" y="414.02" width="3.3" height="1" fill="#222"/><rect x="27.70" y="418.00" width="3.3" height="1" fill="#222"/><rect x="27.70" y="421.99" width="3.3" height="1" fill="#222"/><rect x="27.70" y="425.97" width="3.3" height="1" fill="#222"/><rect x="26.80" y="429.95" width="4.2" height="1" fill="#222"/><rect x="27.70" y="433.93" width="3.3" height="1" fill="#222"/><rect x="27.70" y="437.91" width="3.3" height="1" fill="#222"/><rect x="27.70" y="441.90" width="3.3" height="1" fill="#222"/><rect x="27.70" y="445.88" width="3.3" height="1" fill="#222"/><rect x="22" y="449.86" width="9" height="0.9" fill="#333"/><text x="23" y="455.26" font-size="4.7" fill="#111" font-family="Liberation Sans, sans-serif">4</text><text x="23" y="459.46" font-size="4.7" fill="#111" font-family="Liberation Sans, sans-serif">0</text><text x="23" y="463.66" font-size="4.7" fill="#111" font-family="Liberation Sans, sans-serif">0</text><rect x="27.70" y="453.84" width="3.3" height="1" fill="#222"/><rect x="27.70" y="457.82" width="3.3" height="1" fill="#222"/><rect x="27.70" y="461.81" width="3.3" height="1" fill="#222"/></svg>
<div style="left:22px;top:45.5px;width:8.5px;height:8.5px;background:#f4f4f4;"></div>
<svg style="left:22px;top:45.5px" width="9" height="9"><path d="M6 0 V8 M0 6 H8" stroke="#999" stroke-width="0.6" stroke-dasharray="1 1"/></svg>
<div style="left:172px;top:130.5px;width:528.3px;height:324.6px;background:#ffffff;"></div>
<svg style="left:0;top:0" width="1000" height="464" fill="none" stroke="#747474" stroke-width="1.05" stroke-linecap="round" stroke-linejoin="round">
<path d="M351.1 250.5 C351.4 245.1 352.4 226.2 353.0 217.8 C353.6 209.4 354.1 203.8 354.4 200.0 C354.7 196.2 354.6 196.2 354.9 195.0 C355.2 193.8 355.4 193.3 356.0 192.8 C356.6 192.3 355.9 192.1 358.2 192.2 C360.5 192.2 365.5 192.7 370.0 193.1 C374.5 193.5 380.0 194.2 385.0 194.6 C390.0 195.0 394.4 195.0 400.0 195.3 C405.6 195.7 409.7 196.4 418.4 196.7 C427.1 197.0 446.5 197.0 452.1 197.1"/>
<path d="M452.1 197.1 C452.0 202.3 451.7 217.7 451.2 228.1 C450.7 238.5 449.6 254.4 449.3 259.6"/>
<path d="M452.1 196.9 C457.3 197.0 473.1 197.0 483.1 197.4 C493.2 197.8 503.5 198.9 512.4 199.1 C521.3 199.3 530.6 199.0 536.6 198.8 C542.6 198.6 546.1 197.8 548.6 197.9 C551.1 198.0 551.1 198.4 551.8 199.4 C552.5 200.4 552.8 199.2 552.9 204.0 C553.0 208.8 552.3 219.7 552.1 228.1 C551.9 236.5 551.8 250.0 551.7 254.4"/>
<path d="M352.9 217.4 C350.7 217.7 343.8 218.5 339.9 219.1 C336.0 219.7 331.9 220.2 329.6 220.9 C327.3 221.7 326.8 222.1 326.0 223.6 C325.2 225.1 325.3 226.9 325.0 230.0 C324.7 233.1 324.6 236.1 324.4 241.9 C324.2 247.7 323.8 257.8 323.6 265.0 C323.4 272.2 323.2 281.7 323.1 285.0"/>
<path d="M552.4 221.2 C554.4 221.4 560.4 221.9 564.1 222.6 C567.8 223.3 571.9 224.5 574.5 225.5 C577.1 226.5 578.7 227.6 579.8 228.8 C580.9 230.1 581.0 228.8 581.0 233.0 C581.0 237.2 580.3 248.2 580.0 254.0 C579.7 259.8 579.5 262.1 579.2 268.0 C578.9 273.9 578.3 285.8 578.1 289.4"/>
<path d="M334.8 286.4 C331.7 286.0 333.6 285.3 333.2 284.5 C332.8 283.7 332.7 283.9 332.6 281.4 C332.5 278.9 332.5 272.3 332.8 269.3 C333.1 266.3 332.9 265.5 334.2 263.3 C335.5 261.1 338.1 258.4 340.9 256.4 C343.7 254.4 347.8 252.3 351.2 251.2 C354.6 250.0 355.6 249.9 361.6 249.5 C367.6 249.1 378.5 249.0 387.4 249.0 C396.3 249.0 408.1 249.0 415.0 249.5 C421.9 250.0 424.5 250.9 428.8 252.1 C433.1 253.2 437.7 254.8 440.9 256.4 C444.1 258.0 446.2 259.7 447.8 261.6 C449.4 263.5 449.8 264.3 450.3 267.6 C450.8 270.9 451.1 278.1 451.0 281.4 C450.9 284.7 450.4 285.9 449.7 287.2 C449.0 288.5 451.9 289.1 446.7 289.4 C441.5 289.7 428.8 289.2 418.4 289.0 C407.9 288.8 392.1 288.1 384.0 287.9 C375.9 287.6 375.3 287.7 370.0 287.5 C364.7 287.3 357.9 286.9 352.0 286.7 C346.1 286.5 337.9 286.8 334.8 286.4 Z"/>
<path d="M449.4 260.3 C450.7 259.5 453.6 256.9 457.2 255.5 C460.8 254.1 465.5 252.6 471.0 251.7 C476.5 250.8 483.7 250.5 490.0 250.3 C496.3 250.1 502.4 250.3 509.0 250.7 C515.6 251.0 522.8 251.5 529.7 252.4 C536.6 253.3 544.8 254.5 550.3 255.9 C555.8 257.3 559.2 259.0 562.4 260.7 C565.6 262.4 567.9 264.3 569.4 265.9 C570.9 267.5 571.3 267.3 571.6 270.5 C571.9 273.7 571.5 282.0 571.1 285.1 C570.8 288.2 570.3 288.4 569.5 289.4 C568.7 290.4 570.2 290.7 566.2 291.0 C562.2 291.3 551.0 291.1 545.8 291.0 C540.6 290.9 542.6 290.5 535.0 290.4 C527.4 290.3 511.8 290.4 500.3 290.3 C488.8 290.2 473.6 290.2 465.9 290.0 C458.1 289.8 456.3 289.7 453.8 289.1 C451.3 288.5 451.3 289.6 450.9 286.6 C450.5 283.6 451.4 275.3 451.2 271.0 C451.0 266.7 449.9 262.7 449.6 261.0"/>
<path d="M333.2 284.5 C331.6 284.6 325.7 284.8 323.5 285.4 C321.3 285.9 321.0 286.6 320.2 287.8 C319.4 289.0 318.9 290.2 318.6 292.6 C318.3 295.0 318.3 299.9 318.4 302.3 C318.5 304.7 318.8 306.2 319.2 307.2 C319.6 308.2 317.9 308.3 320.8 308.5 C323.8 308.7 328.7 308.6 336.9 308.6 C345.1 308.7 359.3 308.7 370.0 308.8 C380.7 308.9 389.5 309.3 401.2 309.5 C412.9 309.7 424.9 309.7 440.0 309.9 C455.1 310.1 475.9 310.5 491.7 310.7 C507.5 310.9 522.9 311.0 535.0 311.2 C547.1 311.4 557.2 311.6 564.1 311.8 C571.0 312.0 574.0 312.4 576.5 312.2 C579.0 312.0 578.4 311.5 579.2 310.4 C580.0 309.3 580.7 308.0 581.3 305.6 C581.9 303.2 582.5 298.1 582.6 295.9 C582.7 293.6 582.6 293.2 581.9 292.1 C581.1 291.1 580.1 290.2 578.1 289.6 C576.1 289.0 571.4 288.7 570.0 288.5"/>
</svg>
<div style="left:840.8px;top:45.5px;width:8.4px;height:418.5px;background:#f0f0f0;"></div>
<div style="left:840.5px;top:45.5px;width:0.7px;height:418.5px;background:#bbb;"></div>
<div style="left:2px;top:42px;width:19.4px;height:318.3px;background:#d4d4d4;"></div>
<div style="left:2px;top:360.3px;width:19.4px;height:104px;background:#646464;"></div>
<div style="left:21.2px;top:35.5px;width:0.6px;height:429px;background:#777;"></div>
<svg class="b" style="left:6.8px;top:47.6px" width="10.8" height="9.9" viewBox="0 0 12 11"><path d="M1 1 L1 9 L6 5 Z" fill="#555"/><path d="M9 3.5 L11 6 L9 8.5 L7 6 Z" fill="#777"/></svg>
<svg class="b" style="left:6.8px;top:60.6px" width="10.8" height="9.9" viewBox="0 0 12 11"><rect x="1" y="1.5" width="9" height="7.5" fill="none" stroke="#555" stroke-width="0.9" stroke-dasharray="1.5 1"/></svg>
<svg class="b" style="left:6.8px;top:73.6px" width="10.8" height="9.9" viewBox="0 0 12 11"><path d="M2 2 Q6 0 10 2 Q11 5 7 6.5 Q3 7 2 5 Z M4 6.5 Q3 9 5 10" fill="none" stroke="#555" stroke-width="1.2"/></svg>
<svg class="b" style="left:6.8px;top:85.6px" width="10.8" height="9.9" viewBox="0 0 12 11"><circle cx="4.5" cy="4" r="3" fill="none" stroke="#888" stroke-width="0.9" stroke-dasharray="1 0.8"/><path d="M5 4.5 L10 9.5" stroke="#555" stroke-width="1.8"/></svg>
<svg class="b" style="left:6.8px;top:97.6px" width="10.8" height="9.9" viewBox="0 0 12 11"><path d="M3 0.5 V8 H11 M0.5 3 H8 V10.5" fill="none" stroke="#555" stroke-width="1.5"/></svg>
<svg class="b" style="left:6.8px;top:109.6px" width="10.8" height="9.9" viewBox="0 0 12 11"><path d="M1.5 9.5 L6 5 L7.5 6.5 L3 10 Z" fill="#777"/><path d="M6 3 L8 1 Q10 0.5 10.5 2 L9 4.5 L7.5 6 Z" fill="#555"/></svg>
<div style="left:5px;top:120.5px;width:14px;height:0.7px;background:#b0b0b0"></div>
<svg class="b" style="left:6.8px;top:122.6px" width="10.8" height="9.9" viewBox="0 0 12 11"><path d="M1 8.5 L8 1.5 Q10 0.5 10.5 2.5 L3.5 10 Q1.5 10.5 1 8.5 Z" fill="#555"/><path d="M4 7 L7 4" stroke="#ccc" stroke-width="0.8"/></svg>
<svg class="b" style="left:6.8px;top:134.6px" width="10.8" height="9.9" viewBox="0 0 12 11"><path d="M1 10 Q1 7 3.5 6.5 L5 8 Q4.5 10.5 1 10 Z" fill="#555"/><path d="M4.5 6 L9.5 1 L10.5 2 L6 7.5 Z" fill="#555"/></svg>
<svg class="b" style="left:6.8px;top:146.6px" width="10.8" height="9.9" viewBox="0 0 12 11"><path d="M4.5 0.5 h3 v4 h3 v3 h-9 v-3 h3 z" fill="#555"/><rect x="1" y="8.5" width="10" height="1.8" fill="#555"/></svg>
<svg class="b" style="left:6.8px;top:158.6px" width="10.8" height="9.9" viewBox="0 0 12 11"><path d="M1 10 Q1 7 3.5 6.5 L5 8 Q4.5 10.5 1 10 Z M4.5 6 L9.5 1 L10.5 2 L6 7.5 Z" fill="#555"/><path d="M2 4 A3.5 3.5 0 0 1 8 2" fill="none" stroke="#666" stroke-width="1"/></svg>
<svg class="b" style="left:6.8px;top:170.6px" width="10.8" height="9.9" viewBox="0 0 12 11"><path d="M1 8 L7 1.5 L10.5 3.5 L4.5 10 L2 10 Z" fill="#555"/><path d="M1 8 L4.5 10 L3 10.5 L1.5 10 Z" fill="#ddd"/></svg>
<div style="left:7.5px;top:183.5px;width:9px;height:8.5px;border:0.8px solid #444;background:linear-gradient(90deg,#333,#ddd)"></div>
<svg class="b" style="left:6.8px;top:195.6px" width="10.8" height="9.9" viewBox="0 0 12 11"><path d="M6 1 Q9.5 6 9 7.5 Q8.5 10 6 10 Q3.5 10 3 7.5 Q2.5 6 6 1 Z" fill="#999" stroke="#666" stroke-width="0.8"/></svg>
<svg class="b" style="left:6.8px;top:207.6px" width="10.8" height="9.9" viewBox="0 0 12 11"><circle cx="4.5" cy="4" r="3.2" fill="#555"/><path d="M6.5 6 L10 10" stroke="#555" stroke-width="1.6"/></svg>
<div style="left:5px;top:219.5px;width:13.4px;height:12px;border:0.9px solid #333;background:#e6e6e6;border-radius:1px"></div>
<svg class="b" style="left:6.5px;top:220.1px" width="10.8" height="9.9" viewBox="0 0 12 11"><path d="M2 8 L6 7 L9 2.5 L10.5 4 L7 8.5 L4 10 L2 9.5 Z" fill="#555"/><path d="M1.5 5 Q2 2 6 1.5" fill="none" stroke="#666" stroke-width="0.9"/></svg>
<div class="t" style="left:8.2px;top:232px;font-size:10.5px;line-height:12px;color:#444;font-weight:bold;font-family:'Liberation Serif',serif;">T</div>
<svg class="b" style="left:6.8px;top:244.6px" width="10.8" height="9.9" viewBox="0 0 12 11"><path d="M3 1 L3 9 L5 7 L6.5 10 L7.8 9.4 L6.3 6.5 L9 6.3 Z" fill="#555"/></svg>
<svg class="b" style="left:6.8px;top:256.6px" width="10.8" height="9.9" viewBox="0 0 12 11"><path d="M1.5 10 L10 1" stroke="#555" stroke-width="1.3"/></svg>
<div style="left:5px;top:268.5px;width:14px;height:0.7px;background:#b0b0b0"></div>
<svg class="b" style="left:6.8px;top:270.6px" width="10.8" height="9.9" viewBox="0 0 12 11"><ellipse cx="6" cy="5.5" rx="4.5" ry="2.3" fill="none" stroke="#555" stroke-width="1.1"/><ellipse cx="6" cy="5.5" rx="2" ry="4.5" fill="none" stroke="#666" stroke-width="1"/></svg>
<svg class="b" style="left:6.8px;top:282.6px" width="10.8" height="9.9" viewBox="0 0 12 11"><path d="M2 8 A4.5 4.5 0 1 1 9 8" fill="none" stroke="#555" stroke-width="1.3"/><path d="M7.5 6 L10.5 8.5 L7 10 Z" fill="#555"/><circle cx="5.5" cy="5" r="1.3" fill="#666"/></svg>
<div style="left:5px;top:293.5px;width:14px;height:0.7px;background:#b0b0b0"></div>
<svg class="b" style="left:6.8px;top:295.6px" width="10.8" height="9.9" viewBox="0 0 12 11"><path d="M3 5 V2.5 Q3.5 1.5 4.3 2.5 V1.5 Q5 0.5 5.8 1.5 V1.8 Q6.5 1 7.2 2 V3 Q8 2.3 8.6 3.2 V7 Q8.5 10 6 10.3 Q3.5 10.3 2.5 8 L1.2 5.5 Q1.8 4.5 3 5.8 Z" fill="#ddd" stroke="#555" stroke-width="0.8"/></svg>
<svg class="b" style="left:6.8px;top:307.6px" width="10.8" height="9.9" viewBox="0 0 12 11"><circle cx="4.8" cy="4.3" r="3.2" fill="#e4e4e4" stroke="#555" stroke-width="1"/><path d="M7 6.8 L10.5 10.2" stroke="#555" stroke-width="1.7"/></svg>
<div style="left:6.5px;top:322px;width:3px;height:3px;background:#fff;border:0.5px solid #333"></div>
<div style="left:5px;top:320.5px;width:3.2px;height:3.2px;background:#111"></div>
<svg style="left:13px;top:320px" width="6" height="6"><path d="M1 1.5 H4.5 V5" fill="none" stroke="#444" stroke-width="0.9"/></svg>
<div style="left:9.5px;top:333.5px;width:9.5px;height:9.5px;background:#fff;border:0.6px solid #888"></div>
<div style="left:4.8px;top:328.4px;width:9.4px;height:9.2px;background:#000;border:0.5px solid #666"></div>
<div style="left:8px;top:347px;width:8.5px;height:6.5px;background:#f0f0f0;border:0.8px solid #555"></div>
<div style="left:10.7px;top:348.6px;width:3.2px;height:3.2px;border-radius:50%;border:0.7px solid #777"></div>
<div style="left:18px;top:57px;width:0;height:0;border-left:1.6px solid transparent;border-bottom:1.6px solid #333"></div>
<div style="left:18px;top:70px;width:0;height:0;border-left:1.6px solid transparent;border-bottom:1.6px solid #333"></div>
<div style="left:18px;top:83px;width:0;height:0;border-left:1.6px solid transparent;border-bottom:1.6px solid #333"></div>
<div style="left:18px;top:95px;width:0;height:0;border-left:1.6px solid transparent;border-bottom:1.6px solid #333"></div>
<div style="left:18px;top:107px;width:0;height:0;border-left:1.6px solid transparent;border-bottom:1.6px solid #333"></div>
<div style="left:18px;top:119px;width:0;height:0;border-left:1.6px solid transparent;border-bottom:1.6px solid #333"></div>
<div style="left:18px;top:132px;width:0;height:0;border-left:1.6px solid transparent;border-bottom:1.6px solid #333"></div>
<div style="left:18px;top:144px;width:0;height:0;border-left:1.6px solid transparent;border-bottom:1.6px solid #333"></div>
<div style="left:18px;top:156px;width:0;height:0;border-left:1.6px solid transparent;border-bottom:1.6px solid #333"></div>
<div style="left:18px;top:168px;width:0;height:0;border-left:1.6px solid transparent;border-bottom:1.6px solid #333"></div>
<div style="left:18px;top:180px;width:0;height:0;border-left:1.6px solid transparent;border-bottom:1.6px solid #333"></div>
<div style="left:18px;top:193px;width:0;height:0;border-left:1.6px solid transparent;border-bottom:1.6px solid #333"></div>
<div style="left:18px;top:205px;width:0;height:0;border-left:1.6px solid transparent;border-bottom:1.6px solid #333"></div>
<div style="left:18px;top:217px;width:0;height:0;border-left:1.6px solid transparent;border-bottom:1.6px solid #333"></div>
<div style="left:18px;top:241px;width:0;height:0;border-left:1.6px solid transparent;border-bottom:1.6px solid #333"></div>
<div style="left:18px;top:253px;width:0;height:0;border-left:1.6px solid transparent;border-bottom:1.6px solid #333"></div>
<div style="left:18px;top:265px;width:0;height:0;border-left:1.6px solid transparent;border-bottom:1.6px solid #333"></div>
<div style="left:18px;top:280px;width:0;height:0;border-left:1.6px solid transparent;border-bottom:1.6px solid #333"></div>
<div style="left:18px;top:292px;width:0;height:0;border-left:1.6px solid transparent;border-bottom:1.6px solid #333"></div>
<div style="left:849.2px;top:35px;width:150.8px;height:429px;background:#646464;"></div>
<div style="left:849.2px;top:35.5px;width:150.8px;height:6px;background:#404040;"></div>
<div class="t " style="left:862.5px;top:35px;font-size:5px;color:#ccc;line-height:7px;letter-spacing:-1px;">▸▸</div>
<div class="t " style="left:990px;top:35px;font-size:5px;color:#ddd;line-height:7px;letter-spacing:-1px;">▸▸</div>
<div style="left:850px;top:42px;width:18px;height:22px;background:#dcdcdc;"></div>
<svg class="b" style="left:855px;top:49px" width="9" height="11" viewBox="0 0 9 11"><path d="M1 1 h3 v3 h-3 z M5 0.5 q3 1 2.5 5 l-2 -1 z M1 5.5 h3 v4 h-3 z M5.5 6.5 l2 1 l-1.5 3 z" fill="#555"/></svg>
<div style="left:868.5px;top:42px;width:131.5px;height:180px;background:#dadada;"></div>
<div style="left:868.5px;top:41.5px;width:131.5px;height:9px;background:linear-gradient(#838383,#939393);"></div>
<div style="left:869px;top:42.3px;width:18px;height:8.5px;background:#dcdcdc;border:0.6px solid #777;border-bottom:none;"></div>
<div class="t " style="left:872.5px;top:42.6px;font-size:5.9px;color:#333;line-height:7.9px;">色板</div>
<div class="t " style="left:891px;top:42.6px;font-size:5.9px;color:#555;line-height:7.9px;">样式</div>
<div style="left:888px;top:43px;width:0.6px;height:7px;background:#777;"></div>
<div style="left:906px;top:43px;width:0.6px;height:7px;background:#777;"></div>
<div class="t " style="left:909.5px;top:42.6px;font-size:5.9px;color:#555;line-height:7.9px;">信息</div>
<div style="left:923.5px;top:43px;width:0.6px;height:7px;background:#777;"></div>
<div class="t " style="left:990px;top:42.5px;font-size:5px;color:#444;line-height:7px;">▾≡</div>
<svg style="left:0;top:0" width="1000" height="464"><rect x="869.6" y="51.1" width="119.15" height="37.9" fill="#333"/><rect x="869.6" y="88.60000000000001" width="50.4" height="6.65" fill="#333"/><rect x="870.20" y="51.70" width="5.45" height="5.45" fill="#ff0000"/><rect x="876.45" y="51.70" width="5.45" height="5.45" fill="#ffff00"/><rect x="882.70" y="51.70" width="5.45" height="5.45" fill="#00ff00"/><rect x="888.95" y="51.70" width="5.45" height="5.45" fill="#00ffff"/><rect x="895.20" y="51.70" width="5.45" height="5.45" fill="#0000ff"/><rect x="901.45" y="51.70" width="5.45" height="5.45" fill="#ff00ff"/><rect x="907.70" y="51.70" width="5.45" height="5.45" fill="#ffffff"/><rect x="913.95" y="51.70" width="5.45" height="5.45" fill="#e6e6e6"/><rect x="920.20" y="51.70" width="5.45" height="5.45" fill="#dadada"/><rect x="926.45" y="51.70" width="5.45" height="5.45" fill="#cdcdcd"/><rect x="932.70" y="51.70" width="5.45" height="5.45" fill="#c0c0c0"/><rect x="938.95" y="51.70" width="5.45" height="5.45" fill="#b4b4b4"/><rect x="945.20" y="51.70" width="5.45" height="5.45" fill="#a7a7a7"/><rect x="951.45" y="51.70" width="5.45" height="5.45" fill="#9a9a9a"/><rect x="957.70" y="51.70" width="5.45" height="5.45" fill="#8d8d8d"/><rect x="963.95" y="51.70" width="5.45" height="5.45" fill="#808080"/><rect x="970.20" y="51.70" width="5.45" height="5.45" fill="#ed1c24"/><rect x="976.45" y="51.70" width="5.45" height="5.45" fill="#fff200"/><rect x="982.70" y="51.70" width="5.45" height="5.45" fill="#00a651"/><rect x="870.20" y="57.95" width="5.45" height="5.45" fill="#00aeef"/><rect x="876.45" y="57.95" width="5.45" height="5.45" fill="#2e3192"/><rect x="882.70" y="57.95" width="5.45" height="5.45" fill="#ec008c"/><rect x="888.95" y="57.95" width="5.45" height="5.45" fill="#737373"/><rect x="895.20" y="57.95" width="5.45" height="5.45" fill="#666666"/><rect x="901.45" y="57.95" width="5.45" height="5.45" fill="#595959"/><rect x="907.70" y="57.95" width="5.45" height="5.45" fill="#4c4c4c"/><rect x="913.95" y="57.95" width="5.45" height="5.45" fill="#404040"/><rect x="920.20" y="57.95" width="5.45" height="5.45" fill="#333333"/><rect x="926.45" y="57.95" width="5.45" height="5.45" fill="#262626"/><rect x="932.70" y="57.95" width="5.45" height="5.45" fill="#1a1a1a"/><rect x="938.95" y="57.95" width="5.45" height="5.45" fill="#0d0d0d"/><rect x="945.20" y="57.95" width="5.45" height="5.45" fill="#000000"/><rect x="951.45" y="57.95" width="5.45" height="5.45" fill="#f7977a"/><rect x="957.70" y="57.95" width="5.45" height="5.45" fill="#f9ad81"/><rect x="963.95" y="57.95" width="5.45" height="5.45" fill="#fdc68a"/><rect x="970.20" y="57.95" width="5.45" height="5.45" fill="#fff79a"/><rect x="976.45" y="57.95" width="5.45" height="5.45" fill="#c4df9b"/><rect x="982.70" y="57.95" width="5.45" height="5.45" fill="#a2d39c"/><rect x="870.20" y="64.20" width="5.45" height="5.45" fill="#82ca9d"/><rect x="876.45" y="64.20" width="5.45" height="5.45" fill="#7bcdc8"/><rect x="882.70" y="64.20" width="5.45" height="5.45" fill="#6ecff6"/><rect x="888.95" y="64.20" width="5.45" height="5.45" fill="#7ea7d8"/><rect x="895.20" y="64.20" width="5.45" height="5.45" fill="#8493ca"/><rect x="901.45" y="64.20" width="5.45" height="5.45" fill="#8882be"/><rect x="907.70" y="64.20" width="5.45" height="5.45" fill="#a187be"/><rect x="913.95" y="64.20" width="5.45" height="5.45" fill="#bc8dbf"/><rect x="920.20" y="64.20" width="5.45" height="5.45" fill="#f49ac2"/><rect x="926.45" y="64.20" width="5.45" height="5.45" fill="#f6989d"/><rect x="932.70" y="64.20" width="5.45" height="5.45" fill="#f26c4f"/><rect x="938.95" y="64.20" width="5.45" height="5.45" fill="#f68e55"/><rect x="945.20" y="64.20" width="5.45" height="5.45" fill="#fbaf5c"/><rect x="951.45" y="64.20" width="5.45" height="5.45" fill="#fff467"/><rect x="957.70" y="64.20" width="5.45" height="5.45" fill="#acd372"/><rect x="963.95" y="64.20" width="5.45" height="5.45" fill="#7cc576"/><rect x="970.20" y="64.20" width="5.45" height="5.45" fill="#3bb878"/><rect x="976.45" y="64.20" width="5.45" height="5.45" fill="#1abbb4"/><rect x="982.70" y="64.20" width="5.45" height="5.45" fill="#00bff3"/><rect x="870.20" y="70.45" width="5.45" height="5.45" fill="#438cca"/><rect x="876.45" y="70.45" width="5.45" height="5.45" fill="#5574b9"/><rect x="882.70" y="70.45" width="5.45" height="5.45" fill="#605ca8"/><rect x="888.95" y="70.45" width="5.45" height="5.45" fill="#855fa8"/><rect x="895.20" y="70.45" width="5.45" height="5.45" fill="#a763a8"/><rect x="901.45" y="70.45" width="5.45" height="5.45" fill="#f06ea9"/><rect x="907.70" y="70.45" width="5.45" height="5.45" fill="#f26d7d"/><rect x="913.95" y="70.45" width="5.45" height="5.45" fill="#ed1c24"/><rect x="920.20" y="70.45" width="5.45" height="5.45" fill="#f26522"/><rect x="926.45" y="70.45" width="5.45" height="5.45" fill="#f7941d"/><rect x="932.70" y="70.45" width="5.45" height="5.45" fill="#fff200"/><rect x="938.95" y="70.45" width="5.45" height="5.45" fill="#8dc73f"/><rect x="945.20" y="70.45" width="5.45" height="5.45" fill="#39b54a"/><rect x="951.45" y="70.45" width="5.45" height="5.45" fill="#00a651"/><rect x="957.70" y="70.45" width="5.45" height="5.45" fill="#00a99d"/><rect x="963.95" y="70.45" width="5.45" height="5.45" fill="#00aeef"/><rect x="970.20" y="70.45" width="5.45" height="5.45" fill="#0072bc"/><rect x="976.45" y="70.45" width="5.45" height="5.45" fill="#0054a6"/><rect x="982.70" y="70.45" width="5.45" height="5.45" fill="#2e3192"/><rect x="870.20" y="76.70" width="5.45" height="5.45" fill="#662d91"/><rect x="876.45" y="76.70" width="5.45" height="5.45" fill="#92278f"/><rect x="882.70" y="76.70" width="5.45" height="5.45" fill="#ec008c"/><rect x="888.95" y="76.70" width="5.45" height="5.45" fill="#ed145b"/><rect x="895.20" y="76.70" width="5.45" height="5.45" fill="#9e0b0f"/><rect x="901.45" y="76.70" width="5.45" height="5.45" fill="#a0410d"/><rect x="907.70" y="76.70" width="5.45" height="5.45" fill="#a36209"/><rect x="913.95" y="76.70" width="5.45" height="5.45" fill="#aba000"/><rect x="920.20" y="76.70" width="5.45" height="5.45" fill="#598527"/><rect x="926.45" y="76.70" width="5.45" height="5.45" fill="#1a7b30"/><rect x="932.70" y="76.70" width="5.45" height="5.45" fill="#007236"/><rect x="938.95" y="76.70" width="5.45" height="5.45" fill="#00746b"/><rect x="945.20" y="76.70" width="5.45" height="5.45" fill="#0076a3"/><rect x="951.45" y="76.70" width="5.45" height="5.45" fill="#004b80"/><rect x="957.70" y="76.70" width="5.45" height="5.45" fill="#003471"/><rect x="963.95" y="76.70" width="5.45" height="5.45" fill="#1b1464"/><rect x="970.20" y="76.70" width="5.45" height="5.45" fill="#440e62"/><rect x="976.45" y="76.70" width="5.45" height="5.45" fill="#630460"/><rect x="982.70" y="76.70" width="5.45" height="5.45" fill="#9e005d"/><rect x="870.20" y="82.95" width="5.45" height="5.45" fill="#9e0039"/><rect x="876.45" y="82.95" width="5.45" height="5.45" fill="#790000"/><rect x="882.70" y="82.95" width="5.45" height="5.45" fill="#7b2e00"/><rect x="888.95" y="82.95" width="5.45" height="5.45" fill="#7d4900"/><rect x="895.20" y="82.95" width="5.45" height="5.45" fill="#827b00"/><rect x="901.45" y="82.95" width="5.45" height="5.45" fill="#406618"/><rect x="907.70" y="82.95" width="5.45" height="5.45" fill="#005e20"/><rect x="913.95" y="82.95" width="5.45" height="5.45" fill="#005826"/><rect x="920.20" y="82.95" width="5.45" height="5.45" fill="#005952"/><rect x="926.45" y="82.95" width="5.45" height="5.45" fill="#005b7f"/><rect x="932.70" y="82.95" width="5.45" height="5.45" fill="#003663"/><rect x="938.95" y="82.95" width="5.45" height="5.45" fill="#002157"/><rect x="945.20" y="82.95" width="5.45" height="5.45" fill="#0d004c"/><rect x="951.45" y="82.95" width="5.45" height="5.45" fill="#32004b"/><rect x="957.70" y="82.95" width="5.45" height="5.45" fill="#4b0049"/><rect x="963.95" y="82.95" width="5.45" height="5.45" fill="#7b0046"/><rect x="970.20" y="82.95" width="5.45" height="5.45" fill="#7a0026"/><rect x="976.45" y="82.95" width="5.45" height="5.45" fill="#c7b299"/><rect x="982.70" y="82.95" width="5.45" height="5.45" fill="#998675"/><rect x="870.20" y="89.20" width="5.45" height="5.45" fill="#736357"/><rect x="876.45" y="89.20" width="5.45" height="5.45" fill="#534741"/><rect x="882.70" y="89.20" width="5.45" height="5.45" fill="#362f2d"/><rect x="888.95" y="89.20" width="5.45" height="5.45" fill="#c69c6d"/><rect x="895.20" y="89.20" width="5.45" height="5.45" fill="#a67c52"/><rect x="901.45" y="89.20" width="5.45" height="5.45" fill="#8c6239"/><rect x="907.70" y="89.20" width="5.45" height="5.45" fill="#754c24"/><rect x="913.95" y="89.20" width="5.45" height="5.45" fill="#603913"/></svg>
<div style="left:988.6px;top:50.5px;width:8.7px;height:164.7px;background:#ececec;"></div>
<div class="t " style="left:991px;top:54px;font-size:4px;color:#999;line-height:6px;">▲</div>
<div class="t " style="left:991px;top:207.5px;font-size:4px;color:#999;line-height:6px;">▼</div>
<div style="left:868.5px;top:215.2px;width:131.5px;height:8.8px;background:#dcdcdc;"></div>
<div style="left:868.5px;top:215px;width:131.5px;height:0.6px;background:#bdbdbd;"></div>
<div style="left:966px;top:216.5px;width:5px;height:5.5px;background:#eee;border:0.8px solid #777;"></div>
<div style="left:978px;top:216.5px;width:5px;height:5.5px;background:#bbb;border:0.8px solid #666;"></div>
<div style="left:868.5px;top:224px;width:131.5px;height:1.4px;background:#333;"></div>
<div style="left:868.5px;top:225.3px;width:131.5px;height:128.2px;background:#d8d8d8;"></div>
<div style="left:868.5px;top:225.3px;width:131.5px;height:8.8px;background:linear-gradient(#838383,#939393);"></div>
<div style="left:869px;top:225.6px;width:18px;height:8.6px;background:#d8d8d8;border:0.6px solid #777;border-bottom:none;"></div>
<div class="t " style="left:872.5px;top:226px;font-size:5.9px;color:#222;line-height:7.9px;">字符</div>
<div class="t " style="left:891px;top:226px;font-size:5.9px;color:#4a4a4a;line-height:7.9px;">段落</div>
<div style="left:887.5px;top:226.5px;width:0.6px;height:7px;background:#777;"></div>
<div style="left:906px;top:226.5px;width:0.6px;height:7px;background:#777;"></div>
<div class="t " style="left:990px;top:226.5px;font-size:5px;color:#444;line-height:7px;">▾≡</div>
<div style="left:872px;top:237px;width:64px;height:10px;background:#fff;border:0.6px solid #cfcfcf;"></div>
<div class="t " style="left:874px;top:238.3px;font-size:6.2px;color:#1a1a1a;line-height:8.2px;">微软雅黑</div>
<div style="left:929px;top:241px;width:0;height:0;border-left:2px solid transparent;border-right:2px solid transparent;border-top:2px solid #222;"></div>
<div style="left:939.5px;top:237px;width:38px;height:10px;background:#fff;border:0.6px solid #cfcfcf;"></div>
<div class="t " style="left:941.5px;top:238.5px;font-size:5.8px;color:#1a1a1a;line-height:7.8px;">Bold</div>
<div style="left:971px;top:241px;width:0;height:0;border-left:2px solid transparent;border-right:2px solid transparent;border-top:2px solid #222;"></div>
<div class="t " style="left:875px;top:252.5px;font-size:9px;color:#333;line-height:11px;font-family:'Liberation Serif',serif;font-weight:bold;">T</div>
<div class="t " style="left:872.5px;top:254.5px;font-size:6px;color:#333;line-height:8px;font-family:'Liberation Serif',serif;font-weight:bold;">T</div>
<div style="left:885.5px;top:252px;width:28px;height:11px;background:#fff;border:0.6px solid #cfcfcf;"></div>
<div class="t " style="left:887.5px;top:254.0px;font-size:5.8px;color:#1a1a1a;line-height:7.8px;">65 点</div>
<div style="left:913.5px;top:252px;width:10px;height:11px;background:linear-gradient(#f2f2f2,#d2d2d2);border:0.6px solid #9a9a9a;border-radius:1px;"></div>
<div style="left:916.5px;top:256.5px;width:0;height:0;border-left:2px solid transparent;border-right:2px solid transparent;border-top:2px solid #222;"></div>
<div class="t " style="left:929px;top:251px;font-size:6px;color:#333;line-height:8px;font-family:'Liberation Serif',serif;font-weight:bold;">A</div>
<div class="t " style="left:929px;top:256px;font-size:6px;color:#333;line-height:8px;font-family:'Liberation Serif',serif;font-weight:bold;">A</div>
<div style="left:939.5px;top:252px;width:28.5px;height:11px;background:#fff;border:0.6px solid #cfcfcf;"></div>
<div class="t " style="left:941.5px;top:253.8px;font-size:6.2px;color:#1a1a1a;line-height:8.2px;">(自动)</div>
<div style="left:968px;top:252px;width:10px;height:11px;background:linear-gradient(#f2f2f2,#d2d2d2);border:0.6px solid #9a9a9a;border-radius:1px;"></div>
<div style="left:971.0px;top:256.5px;width:0;height:0;border-left:2px solid transparent;border-right:2px solid transparent;border-top:2px solid #222;"></div>
<div class="t " style="left:876px;top:265px;font-size:9px;color:#333;line-height:11px;font-family:'Liberation Serif',serif;font-weight:bold;">T</div>
<div class="t " style="left:872.5px;top:267px;font-size:8px;color:#333;line-height:10px;font-family:'Liberation Serif',serif;font-weight:bold;">I</div>
<div style="left:885.5px;top:265.5px;width:28px;height:10px;background:#fff;border:0.6px solid #cfcfcf;"></div>
<div class="t " style="left:887.5px;top:267.0px;font-size:5.8px;color:#1a1a1a;line-height:7.8px;">100%</div>
<div class="t " style="left:928px;top:264.5px;font-size:10px;color:#222;line-height:12px;font-family:'Liberation Serif',serif;font-weight:bold;transform:scaleX(1.25);">T</div>
<div style="left:939.5px;top:265.5px;width:28.5px;height:10px;background:#fff;border:0.6px solid #cfcfcf;"></div>
<div class="t " style="left:941.5px;top:267.0px;font-size:5.8px;color:#1a1a1a;line-height:7.8px;">100%</div>
<div style="left:871px;top:276.5px;width:108px;height:0.6px;background:#b4b4b4;"></div>
<div class="t " style="left:873px;top:279.8px;font-size:7.2px;color:#222;line-height:9.2px;font-weight:bold;">あ</div>
<div style="left:885.5px;top:280px;width:28px;height:10px;background:#fff;border:0.6px solid #cfcfcf;"></div>
<div class="t " style="left:887.5px;top:281.5px;font-size:5.8px;color:#1a1a1a;line-height:7.8px;">0%</div>
<div style="left:913.5px;top:279.5px;width:10px;height:11px;background:linear-gradient(#f2f2f2,#d2d2d2);border:0.6px solid #9a9a9a;border-radius:1px;"></div>
<div style="left:916.5px;top:284.0px;width:0;height:0;border-left:2px solid transparent;border-right:2px solid transparent;border-top:2px solid #222;"></div>
<div class="t " style="left:872.8px;top:292.5px;font-size:6.8px;color:#222;line-height:8.8px;font-weight:bold;letter-spacing:-0.7px;text-decoration:underline;">AV</div>
<div style="left:885.5px;top:293px;width:28px;height:10.5px;background:#fff;border:0.6px solid #cfcfcf;"></div>
<div class="t " style="left:887.5px;top:294.75px;font-size:5.8px;color:#1a1a1a;line-height:7.8px;">0</div>
<div style="left:913.5px;top:292.5px;width:10px;height:11px;background:linear-gradient(#f2f2f2,#d2d2d2);border:0.6px solid #9a9a9a;border-radius:1px;"></div>
<div style="left:916.5px;top:297.0px;width:0;height:0;border-left:2px solid transparent;border-right:2px solid transparent;border-top:2px solid #222;"></div>
<div class="t " style="left:928.5px;top:292.8px;font-size:6.6px;color:#333;line-height:8.6px;font-weight:bold;letter-spacing:-0.9px;">AV</div>
<div style="left:939.5px;top:293px;width:28.5px;height:10.5px;background:#dedede;border:0.6px solid #cfcfcf;"></div>
<div style="left:968px;top:292.5px;width:10px;height:11px;background:linear-gradient(#f2f2f2,#d2d2d2);border:0.6px solid #9a9a9a;border-radius:1px;"></div>
<div style="left:971.0px;top:297.0px;width:0;height:0;border-left:2px solid transparent;border-right:2px solid transparent;border-top:2px solid #222;"></div>
<div style="left:871px;top:306px;width:108px;height:0.6px;background:#b4b4b4;"></div>
<div class="t " style="left:873.5px;top:308.8px;font-size:7px;color:#222;line-height:9px;font-family:'Liberation Serif',serif;font-weight:bold;">A</div>
<div class="t " style="left:878.8px;top:307.3px;font-size:5.5px;color:#222;line-height:7.5px;font-family:'Liberation Serif',serif;font-weight:bold;">a</div>
<div style="left:885.5px;top:308.5px;width:28px;height:10px;background:#fff;border:0.6px solid #cfcfcf;"></div>
<div class="t " style="left:887.5px;top:310.0px;font-size:5.8px;color:#1a1a1a;line-height:7.8px;">0 点</div>
<div class="t " style="left:924px;top:311px;font-size:5.9px;color:#222;line-height:7.9px;">颜色:</div>
<div style="left:939.5px;top:308.5px;width:28px;height:9px;background:#000;"></div>
<div style="left:871px;top:321px;width:108px;height:0.6px;background:#b4b4b4;"></div>
<div class="t " style="left:879px;top:325.5px;font-size:6.5px;color:#333;line-height:8.5px;font-family:'Liberation Serif',serif;font-weight:bold;">T</div>
<div class="t " style="left:890px;top:325.5px;font-size:6.5px;color:#333;line-height:8.5px;font-family:'Liberation Serif',serif;font-style:italic;font-weight:bold;">T</div>
<div class="t " style="left:903px;top:325.5px;font-size:6.5px;color:#333;line-height:8.5px;font-family:'Liberation Serif',serif;font-weight:bold;">TT</div>
<div class="t " style="left:916px;top:325.5px;font-size:6.5px;color:#333;line-height:8.5px;font-family:'Liberation Serif',serif;font-weight:bold;">Tт</div>
<div class="t " style="left:927px;top:325.5px;font-size:6.5px;color:#333;line-height:8.5px;font-family:'Liberation Serif',serif;font-weight:bold;">T¹</div>
<div class="t " style="left:938.5px;top:325.5px;font-size:6.5px;color:#333;line-height:8.5px;font-family:'Liberation Serif',serif;font-weight:bold;">T₁</div>
<div class="t " style="left:955px;top:325.5px;font-size:6.5px;color:#333;line-height:8.5px;font-family:'Liberation Serif',serif;font-weight:bold;text-decoration:underline;">T</div>
<div class="t " style="left:965px;top:325.5px;font-size:6.5px;color:#333;line-height:8.5px;font-family:'Liberation Serif',serif;font-weight:bold;text-decoration:line-through;">T</div>
<div style="left:871px;top:336px;width:108px;height:0.6px;background:#b4b4b4;"></div>
<div style="left:872px;top:341px;width:54px;height:10px;background:#fff;border:0.6px solid #cfcfcf;"></div>
<div class="t " style="left:874px;top:342.29999999999995px;font-size:6.2px;color:#1a1a1a;line-height:8.2px;">美国英语</div>
<div style="left:920px;top:345px;width:0;height:0;border-left:2px solid transparent;border-right:2px solid transparent;border-top:2px solid #222;"></div>
<div class="t " style="left:933px;top:341px;font-size:5px;color:#333;line-height:7px;font-weight:bold;">a</div>
<div class="t " style="left:936px;top:343px;font-size:6px;color:#333;line-height:8px;font-weight:bold;">a</div>
<div style="left:942px;top:341px;width:27px;height:10px;background:#fff;border:0.6px solid #cfcfcf;"></div>
<div class="t " style="left:944px;top:342.29999999999995px;font-size:6.2px;color:#1a1a1a;line-height:8.2px;">浑厚</div>
<div style="left:962px;top:345px;width:0;height:0;border-left:2px solid transparent;border-right:2px solid transparent;border-top:2px solid #222;"></div>
<div style="left:868.5px;top:353.2px;width:131.5px;height:1.4px;background:#c4c4c4;"></div>
<div style="left:868.5px;top:354.6px;width:131.5px;height:2.1px;background:#3e3e3e;"></div>
<div style="left:868.5px;top:356.7px;width:131.5px;height:107.5px;background:#d8d8d8;"></div>
<div style="left:868.5px;top:356.7px;width:131.5px;height:9px;background:linear-gradient(#838383,#939393);"></div>
<div class="t " style="left:872.5px;top:357.6px;font-size:5.9px;color:#4a4a4a;line-height:7.9px;">图层</div>
<div style="left:887.5px;top:358px;width:0.6px;height:7px;background:#777;"></div>
<div class="t " style="left:891px;top:357.6px;font-size:5.9px;color:#4a4a4a;line-height:7.9px;">通道</div>
<div style="left:905.5px;top:358px;width:0.6px;height:7px;background:#777;"></div>
<div style="left:906px;top:357.4px;width:18.6px;height:8.5px;background:#d8d8d8;border:0.6px solid #777;border-bottom:none;"></div>
<div class="t " style="left:909.5px;top:357.6px;font-size:5.9px;color:#222;line-height:7.9px;">路径</div>
<div class="t " style="left:990px;top:358px;font-size:5px;color:#444;line-height:7px;">▾≡</div>
<div style="left:868.5px;top:365.5px;width:119.5px;height:14.5px;background:#3399ff;"></div>
<div style="left:871.5px;top:367.5px;width:15.8px;height:10.5px;background:#8c8c8c;border:0.7px solid #444;"></div>
<div style="left:875.2px;top:370.8px;width:10.6px;height:3.8px;background:#1e1e1e;"></div>
<div style="left:877.8px;top:371.4px;width:2.8px;height:1.8px;background:#fff;"></div>
<div style="left:881.8px;top:371.4px;width:2.6px;height:1.8px;background:#fff;"></div>
<div class="t " style="left:890px;top:368.5px;font-size:6.2px;color:#fff;line-height:8.2px;">路径 1</div>
<div style="left:988.3px;top:365.8px;width:8.5px;height:98.5px;background:linear-gradient(90deg,#e2e2e2,#eeeeee 40%,#e8e8e8);"></div>
<div class="t " style="left:991px;top:368px;font-size:4px;color:#999;line-height:6px;">▲</div>
<div style="left:928px;top:458.8px;width:16px;height:16px;background:#dedede;border-radius:50%;border:1px solid #efefef;"></div>
<div style="left:996.8px;top:42px;width:3.2px;height:422px;background:#d2d2d2;"></div>
<div style="left:996.8px;top:42px;width:0.9px;height:422px;background:#707070;"></div>
<div style="left:991px;top:416.5px;width:23.5px;height:23.5px;background:radial-gradient(circle at 35% 40%,#86e392,#35b451 70%);border-radius:50%;border:0.8px solid #dff5e2;"></div>
<div class="t " style="left:994px;top:423.5px;font-size:8px;color:#fff;line-height:10px;">≈</div>
</body></html>
